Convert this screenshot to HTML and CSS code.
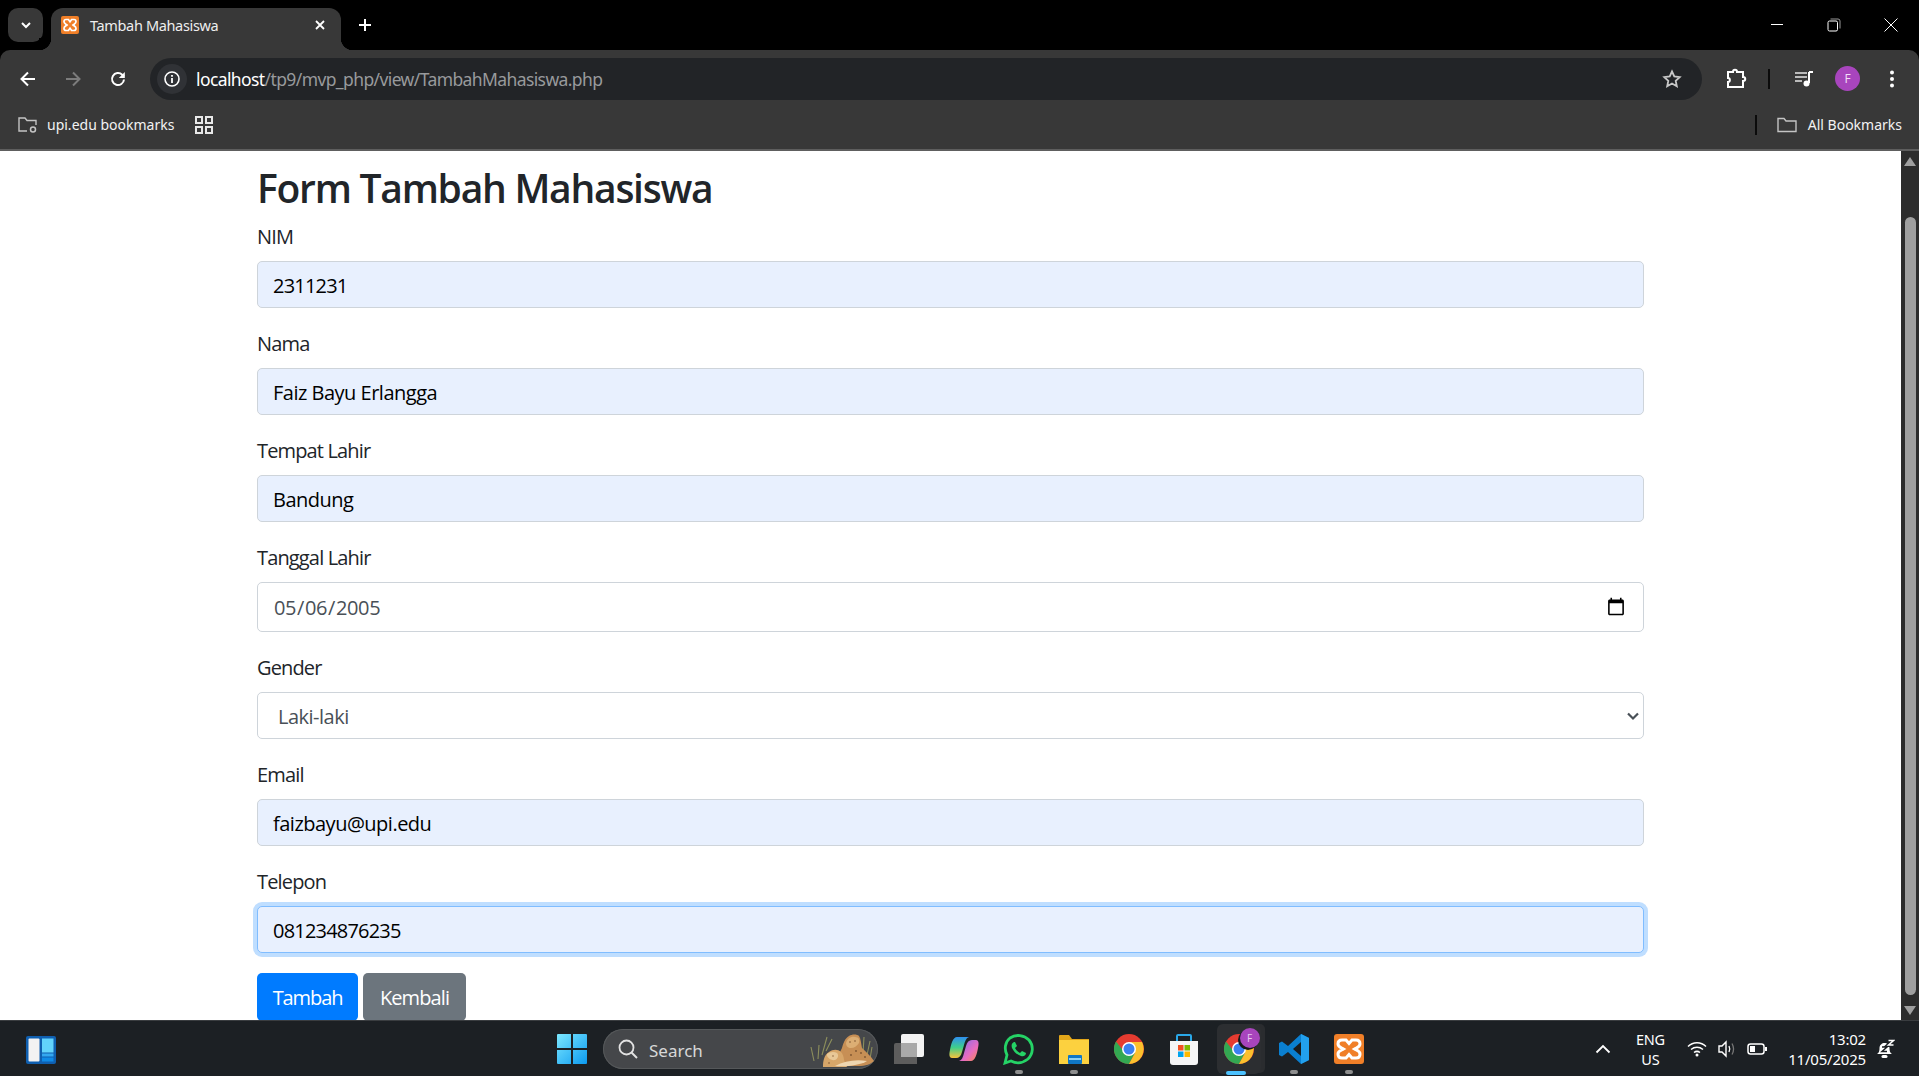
FILE: index.html
```html
<!DOCTYPE html>
<html lang="en">
<head>
<meta charset="utf-8">
<title>Tambah Mahasiswa</title>
<link rel="stylesheet" href="styles.css">
</head>
<body>
<div class="window">
  <header class="tabstrip">
    <button class="tabsearch"><svg width="14" height="14" viewBox="0 0 14 14"><path d="M3 5l4 4 4-4" fill="none" stroke="#fff" stroke-width="2"/></svg></button>
    <div class="tab">
      <svg class="favicon" width="18" height="18" viewBox="0 0 18 18"><rect width="18" height="18" rx="2" fill="#f07f28"/><path d="M5 3.500h2.400l1.600 2.200 1.600-2.200H13c1.600 0 2 1.200 2 2.300 0 1.600-1.500 2-3 3.200 1.500 1.200 3 1.600 3 3.200 0 1.100-.4 2.300-2 2.300h-2.400L9 12.300l-1.600 2.200H5c-1.600 0-2-1.200-2-2.300 0-1.600 1.500-2 3-3.200-1.500-1.200-3-1.600-3-3.200 0-1.100.4-2.300 2-2.300z" fill="none" stroke="#fff" stroke-width="1.700"/></svg>
      <span class="tabtitle">Tambah Mahasiswa</span>
      <svg class="tabclose" width="12" height="12" viewBox="0 0 12 12"><path d="M2 2l8 8M10 2l-8 8" stroke="#fff" stroke-width="1.800"/></svg>
    </div>
    <svg class="newtab" width="16" height="16" viewBox="0 0 16 16"><path d="M8 2v12M2 8h12" stroke="#fff" stroke-width="2"/></svg>
    <div class="winctl">
      <svg width="14" height="14" viewBox="0 0 14 14"><path d="M1 6.500h12" stroke="#fff" stroke-width="1"/></svg>
      <svg width="14" height="14" viewBox="0 0 14 14"><rect x="1" y="3" width="9.500" height="10" rx="1.500" fill="none" stroke="#fff" stroke-width="1"/><path d="M3.500 1h7.500a2 2 0 0 1 2 2v7.500" fill="none" stroke="#999" stroke-width="1"/></svg>
      <svg width="14" height="14" viewBox="0 0 14 14"><path d="M.5.500l13 13M13.500.500l-13 13" stroke="#fff" stroke-width="1"/></svg>
    </div>
  </header>

  <div class="toolbars">
    <nav class="toolbar">
      <svg class="navicon" width="20" height="20" viewBox="0 0 20 20"><path d="M17 10H4M10 3.500L3.500 10l6.500 6.500" fill="none" stroke="#fff" stroke-width="2"/></svg>
      <svg class="navicon" width="20" height="20" viewBox="0 0 20 20"><path d="M3 10h13M10 3.500l6.500 6.500-6.500 6.500" fill="none" stroke="#7c7c7c" stroke-width="2"/></svg>
      <svg class="navicon" width="20" height="20" viewBox="0 0 20 20"><path d="M16 10.500a6 6 0 1 1-1.800-4.800L16 7.500" fill="none" stroke="#fff" stroke-width="2"/><path d="M16.800 3v6h-6z" fill="#fff"/></svg>
      <div class="omnibox">
        <span class="infochip"><svg width="18" height="18" viewBox="0 0 18 18"><circle cx="9" cy="9" r="7" fill="none" stroke="#fff" stroke-width="1.600"/><path d="M9 8v5M9 5v1.700" stroke="#fff" stroke-width="1.800"/></svg></span>
        <span class="url"><span class="urlhost">localhost</span>/tp9/mvp_php/view/TambahMahasiswa.php</span>
        <svg class="star" width="20" height="20" viewBox="0 0 20 20"><path d="M10 2.500l2.300 5 5.400.6-4 3.700 1.100 5.400-4.800-2.700-4.800 2.700 1.100-5.400-4-3.700 5.400-.6z" fill="none" stroke="#c8c8c8" stroke-width="1.800"/></svg>
      </div>
      <svg class="extension" width="22" height="22" viewBox="0 0 22 22"><path d="M3 4h5c0-3 4-3 4 0h6v5c3 0 3 4 0 4v6H3v-5c2.500 0 2.500-4 0-4z" fill="none" stroke="#fff" stroke-width="2"/></svg>
      <span class="vsep"></span>
      <svg class="media" width="20" height="20" viewBox="0 0 20 20"><path d="M1 4h12M1 8h12M1 12h7" stroke="#e6e6e6" stroke-width="1.700"/><path d="M15 3v11" stroke="#fff" stroke-width="2"/><path d="M15 3h4" stroke="#fff" stroke-width="2"/><circle cx="12.500" cy="14.500" r="3" fill="#fff"/></svg>
      <span class="avatar">F</span>
      <svg class="kebab" width="6" height="20" viewBox="0 0 6 20"><circle cx="3" cy="3.500" r="2" fill="#fff"/><circle cx="3" cy="10" r="2" fill="#fff"/><circle cx="3" cy="16.500" r="2" fill="#fff"/></svg>
    </nav>
    <div class="bookmarks">
      <svg width="22" height="18" viewBox="0 0 22 18"><path d="M10 15H2V2h6l2 2.500h9V9" fill="none" stroke="#c4c4c4" stroke-width="1.400"/><circle cx="16" cy="13.500" r="2.500" fill="none" stroke="#c4c4c4" stroke-width="1.500"/></svg>
      <span class="bmlabel">upi.edu bookmarks</span>
      <svg class="apps" width="22" height="22" viewBox="0 0 22 22"><g fill="none" stroke="#e8e8e8" stroke-width="2"><rect x="3" y="3" width="6" height="6"/><rect x="13" y="3" width="6" height="6"/><rect x="3" y="13" width="6" height="6"/><rect x="13" y="13" width="6" height="6"/></g></svg>
      <span class="bmsep"></span>
      <svg class="allfolder" width="20" height="16" viewBox="0 0 20 16"><path d="M1 14.500V1.500h6l2 2.500h10v10.500z" fill="none" stroke="#c4c4c4" stroke-width="1.400"/></svg>
      <span class="bmall">All Bookmarks</span>
    </div>
  </div>

  <main class="viewport">
    <div class="page">
      <h2 class="title">Form Tambah Mahasiswa</h2>
      <form class="form">
        <div class="group"><label class="label">NIM</label><input class="control filled digits" type="text" value="2311231"></div>
        <div class="group"><label class="label">Nama</label><input class="control filled" type="text" value="Faiz Bayu Erlangga"></div>
        <div class="group"><label class="label">Tempat Lahir</label><input class="control filled" type="text" value="Bandung"></div>
        <div class="group"><label class="label">Tanggal Lahir</label><input class="control date" type="date" value="2005-05-06"></div>
        <div class="group"><label class="label">Gender</label>
          <div class="selectwrap"><select class="control select"><option>Laki-laki</option></select>
            <svg class="chevron" width="14" height="10" viewBox="0 0 14 10"><path d="M2 2.500l5 5 5-5" fill="none" stroke="#495057" stroke-width="2.200"/></svg>
          </div>
        </div>
        <div class="group"><label class="label">Email</label><input class="control filled" type="text" value="faizbayu@upi.edu"></div>
        <div class="group"><label class="label">Telepon</label><input class="control filled focus digits" type="text" value="081234876235"></div>
        <div class="actions"><button type="button" class="btn primary">Tambah</button><button type="button" class="btn secondary">Kembali</button></div>
      </form>
    </div>
    <div class="scrollbar">
      <svg class="arrow" width="12" height="9" viewBox="0 0 12 9"><path d="M6 0l6 9H0z" fill="#9f9f9f"/></svg>
      <div class="thumb"></div>
      <svg class="arrow" width="12" height="9" viewBox="0 0 12 9"><path d="M6 9L0 0h12z" fill="#9f9f9f"/></svg>
    </div>
  </main>

  <footer class="taskbar">
    <div class="tb-left">
      <svg width="30" height="28" viewBox="0 0 30 28"><rect width="30" height="28" rx="2" fill="#0f5fb0"/><rect x="2.500" y="2.500" width="11" height="23" rx="1" fill="#f2f2f2"/><rect x="16" y="2.500" width="11.500" height="14" fill="#62d3fb"/><rect x="16" y="17.500" width="11.500" height="3" fill="#34a8f0"/><rect x="16" y="21.500" width="11.500" height="4" fill="#0f8ae6"/></svg>
    </div>
    <div class="tb-center">
      <div class="tb-item"><svg width="30" height="30" viewBox="0 0 30 30"><defs><linearGradient id="win" x1="0" y1="0" x2="1" y2="1"><stop offset="0" stop-color="#7ce8ff"/><stop offset="1" stop-color="#0c9af0"/></linearGradient></defs><path d="M0 1a1 1 0 0 1 1-1h13v14H0zM16 0h13a1 1 0 0 1 1 1v13H16zM0 16h14v14H1a1 1 0 0 1-1-1zM16 16h14v13a1 1 0 0 1-1 1H16z" fill="url(#win)"/></svg></div>
      <div class="search">
        <svg width="22" height="22" viewBox="0 0 22 22"><circle cx="9.500" cy="9.500" r="7" fill="none" stroke="#e2e2e2" stroke-width="1.800"/><path d="M14.500 14.500l5.500 5.500" stroke="#e2e2e2" stroke-width="2"/></svg>
        <span class="searchtext">Search</span>
        <svg class="cheetah" width="66" height="36" viewBox="0 0 66 36"><g stroke="#8d8f5c" stroke-width="1.100" fill="none"><path d="M5 30L2 16M9 28l1-14M13 24L18 6M17 20l6-12M54 22l1-16M58 24l3-14M61 28l2-12"/></g><path d="M33 17c1-4 3-10 7-12 3-2 8-2 10 0 2 3 2 8 3 12 4 4 9 8 12 13-3 3-8 5-16 5H24z" fill="#c78f55"/><path d="M37 12c1-4 5-7 9-6 4 0 5 3 4 6-2 3-5 5-8 5-3 0-5-2-5-5z" fill="#dcae74"/><path d="M14 36c0-6 1-12 6-15 4-3 9-3 12 0 2 2 3 6 3 8l3 7z" fill="#d7a669"/><path d="M18 23c2-2 7-3 10-1 2 2 1 6-2 7-4 1-9-3-8-6z" fill="#e8c897"/><path d="M26 35c9-5 21-7 32-5-6 4-20 6-32 5z" fill="#efd6b0"/><g fill="#7d5430"><circle cx="52" cy="22" r=".9"/><circle cx="47" cy="20" r=".9"/><circle cx="56" cy="26" r=".9"/><circle cx="42" cy="24" r=".9"/><circle cx="46" cy="10" r=".8"/><circle cx="41" cy="11" r=".8"/><circle cx="24" cy="25" r=".7"/><circle cx="20" cy="32" r=".8"/></g></svg>
      </div>
      <div class="tb-item"><svg width="30" height="30" viewBox="0 0 30 30"><rect x="0" y="9" width="23" height="23" rx="2" fill="#5d5d5d"/><rect x="7" y="0" width="23" height="23" rx="2" fill="#f3f3f3"/><rect x="7" y="9" width="16" height="14" fill="#a9a9a9"/></svg></div>
      <div class="tb-item"><svg width="30" height="30" viewBox="0 0 30 30"><defs><linearGradient id="cpa" x1="0" y1="0" x2="0" y2="1"><stop offset="0" stop-color="#2f8ff0"/><stop offset=".5" stop-color="#3fcf8a"/><stop offset="1" stop-color="#f7c33c"/></linearGradient><linearGradient id="cpb" x1="0" y1="0" x2="1" y2="1"><stop offset="0" stop-color="#7f6cf0"/><stop offset=".6" stop-color="#e86cc0"/><stop offset="1" stop-color="#f88a4a"/></linearGradient></defs><path d="M8 3h12c-3 1-4 4-5 8l-2 7c-1 4-3 6-6 6H3C0 24 0 20 1 16 2 10 4 3 8 3z" fill="url(#cpa)"/><path d="M22 27H10c3-1 4-4 5-8l2-7c1-4 3-6 6-6h4c3 0 3 4 2 8-1 6-3 13-7 13z" fill="url(#cpb)"/></svg></div>
      <div class="tb-item with-dot"><svg width="32" height="32" viewBox="0 0 32 32"><path d="M2 30l2-8C1 16 2 9 7 5c6-4 14-3 19 2 5 6 4 14-1 19-5 4-11 5-17 2z" fill="none" stroke="#25d366" stroke-width="2.800"/><path d="M11 9c-2 1-3 3-2 6 2 4 5 7 9 8 3 1 5-1 5-3l-4-2-2 2c-2-1-4-3-5-5l2-2-2-4z" fill="#25d366"/></svg><i class="dot"></i></div>
      <div class="tb-item with-dot"><svg width="30" height="30" viewBox="0 0 30 30"><path d="M0 2a1 1 0 0 1 1-1h9l3 4h17v24H0z" fill="#e3a71a"/><rect y="6" width="30" height="24" fill="#fcd13f"/><rect x="9" y="21" width="14" height="9" rx="1" fill="#0f77c6"/><rect x="10" y="24" width="12" height="2" fill="#8bd0f5"/></svg><i class="dot"></i></div>
      <div class="tb-item"><svg width="30" height="30" viewBox="0 0 30 30"><circle cx="15" cy="15" r="15" fill="#e53b30"/><path d="M8 15L2 7.500A15 15 0 0 0 15 30l6-11z" fill="#33a852"/><path d="M15 8h13A15 15 0 0 1 15 30l6-11z" fill="#fbc02d"/><circle cx="15" cy="15" r="7" fill="#fff"/><circle cx="15" cy="15" r="5.500" fill="#3b80f0"/></svg></div>
      <div class="tb-item"><svg width="30" height="32" viewBox="0 0 30 32"><path d="M8 8V3a1 1 0 0 1 1-1h12a1 1 0 0 1 1 1v5" fill="none" stroke="#2aa8e8" stroke-width="2"/><path d="M1 8h28v21a3 3 0 0 1-3 3H4a3 3 0 0 1-3-3z" fill="#f5f5f5"/><rect x="9" y="12" width="5.500" height="5.500" fill="#f25022"/><rect x="15.500" y="12" width="5.500" height="5.500" fill="#7fba00"/><rect x="9" y="18.500" width="5.500" height="5.500" fill="#00a4ef"/><rect x="15.500" y="18.500" width="5.500" height="5.500" fill="#ffb900"/></svg></div>
      <div class="tb-item active">
        <span class="stack"></span>
        <span class="activebg"><svg class="chromeicon" width="30" height="30" viewBox="0 0 30 30"><circle cx="15" cy="15" r="15" fill="#e53b30"/><path d="M8 15L2 7.500A15 15 0 0 0 15 30l6-11z" fill="#33a852"/><path d="M15 8h13A15 15 0 0 1 15 30l6-11z" fill="#fbc02d"/><circle cx="15" cy="15" r="7" fill="#fff"/><circle cx="15" cy="15" r="5.500" fill="#3b80f0"/></svg><span class="badge">F</span></span>
        <i class="activebar"></i>
      </div>
      <div class="tb-item with-dot"><svg width="30" height="30" viewBox="0 0 30 30"><path d="M22 0l8 4v22l-8 4-13-12-6 4.500-3-1.500v-12l3-1.500L9 12z" fill="#0a7fd0"/><path d="M22 0l8 4v22l-8 4z" fill="#22a0ee"/><path d="M22 8l-8 7 8 7z" fill="#1a1c1e"/></svg><i class="dot"></i></div>
      <div class="tb-item with-dot"><svg width="30" height="30" viewBox="0 0 30 30"><rect width="30" height="30" rx="3" fill="#f07f28"/><path d="M8 6h4l3 3.500L18 6h4c3 0 4 2 4 4 0 3-3 3.500-5.500 5 2.500 1.500 5.500 2 5.500 5 0 2-1 4-4 4h-4l-3-3.500L12 24H8c-3 0-4-2-4-4 0-3 3-3.500 5.500-5C7 13.500 4 13 4 10c0-2 1-4 4-4z" fill="none" stroke="#fff" stroke-width="3"/></svg><i class="dot"></i></div>
    </div>
    <div class="tb-right">
      <svg class="tray-up" width="16" height="10" viewBox="0 0 16 10"><path d="M1.500 8.500L8 2l6.500 6.500" fill="none" stroke="#fff" stroke-width="1.800"/></svg>
      <div class="lang"><span>ENG</span><span>US</span></div>
      <svg class="tray-wifi" width="20" height="16" viewBox="0 0 20 16"><g fill="none" stroke="#fff" stroke-width="1.500"><path d="M1 5.500c5-5 13-5 18 0"/><path d="M4 8.500c3.500-3 8.500-3 12 0"/><path d="M7 11.500c2-1.500 4-1.500 6 0"/></g><circle cx="10" cy="14" r="1.500" fill="#fff"/></svg>
      <svg class="tray-vol" width="20" height="18" viewBox="0 0 20 18"><path d="M1 6h3l4-4v14l-4-4H1z" fill="none" stroke="#fff" stroke-width="1.400"/><path d="M11 6c1 2 1 4 0 6" fill="none" stroke="#fff" stroke-width="1.300"/><path d="M14 3.500c2 3.500 2 7.500 0 11" fill="none" stroke="#777" stroke-width="1.300"/></svg>
      <svg class="tray-bat" width="20" height="12" viewBox="0 0 20 12"><rect x="1" y="1" width="16" height="10" rx="2.500" fill="none" stroke="#fff" stroke-width="1.500"/><rect x="3" y="3" width="5" height="6" fill="#fff"/><rect x="18" y="4" width="2" height="4" fill="#fff"/></svg>
      <div class="clock"><span>13:02</span><span>11/05/2025</span></div>
      <svg class="tray-bell" width="18" height="20" viewBox="0 0 18 20"><path d="M0 15c2-1 2.500-3 2.500-6 0-3 2.500-5 5-5s5 2 5 5c0 3 .5 5 2.500 6z" fill="#fff"/><rect x="4.500" y="16" width="6" height="3" rx="1.500" fill="#fff"/><path d="M5 8h5l-5 4.500h5" fill="none" stroke="#1c2024" stroke-width="1.500"/><path d="M11 1h6l-5.500 5h6" fill="none" stroke="#1c2024" stroke-width="4"/><path d="M11.500 1.500h5l-5 4.500h5" fill="none" stroke="#fff" stroke-width="1.500"/></svg>
    </div>
  </footer>
</div>
</body>
</html>
```

FILE: styles.css
```css
* { box-sizing: border-box; }
html, body { margin: 0; padding: 0; height: 100%; overflow: hidden; }
body { font-family: "Open Sans", "Noto Sans", sans-serif; background: #000; }
.window { display: flex; flex-direction: column; height: 1076px; width: 1919px; }

/* tab strip */
.tabstrip { height: 50px; flex: none; background: #000; display: flex; align-items: flex-start; padding: 8px 0 0 8px; }
.tabsearch { width: 35px; height: 34px; border: 0; padding: 0; background: #383838; border-radius: 10px; display: flex; align-items: center; justify-content: center; }
.tab { position: relative; margin-left: 8px; width: 290px; height: 42px; background: #383838; border-radius: 12px 12px 0 0; display: flex; align-items: center; padding: 0 15px 8px 10px; }
.tab::before, .tab::after { content: ""; position: absolute; bottom: 0; width: 12px; height: 12px; }
.tab::before { left: -12px; background: radial-gradient(circle at 0 0, #000 12px, #383838 12.5px); }
.tab::after { right: -12px; background: radial-gradient(circle at 100% 0, #000 12px, #383838 12.5px); }
.favicon { flex: none; }
.tabtitle { margin-left: 11px; flex: 1; color: #eee; font-size: 14.5px; font-family: "Noto Sans", sans-serif; letter-spacing: -.35px; white-space: nowrap; }
.tabclose { flex: none; }
.newtab { margin: 9px 0 0 16px; }
.winctl { margin-left: auto; display: flex; gap: 43px; padding: 10px 21px 0 0; }

/* toolbars */
.toolbars { flex: none; background: #383838; border-radius: 10px 10px 0 0; border-bottom: 2px solid #5e5e5e; height: 101px; }
.toolbar { height: 58px; display: flex; align-items: center; padding: 0 0 0 18px; }
.navicon { flex: none; margin-right: 25px; }
.omnibox { flex: none; margin-left: -3px; width: 1552px; height: 42px; background: #222427; border-radius: 21px; display: flex; align-items: center; padding: 0 20px 0 7px; }
.infochip { width: 30px; height: 30px; border-radius: 50%; background: #303236; display: flex; align-items: center; justify-content: center; flex: none; }
.url { margin-left: 9px; flex: 1; color: #989a9c; font-size: 17.5px; font-family: "Noto Sans", sans-serif; letter-spacing: -.6px; white-space: nowrap; }
.urlhost { color: #fff; }
.star { flex: none; }
.extension { flex: none; margin-left: 23px; }
.vsep { flex: none; width: 2px; height: 20px; background: #0b0b0b; margin-left: 21px; }
.media { flex: none; margin-left: 24px; }
.avatar { flex: none; width: 25px; height: 25px; margin-bottom: 1px; border-radius: 50%; background: #a845bd; color: #f3dff7; font-size: 12px; display: flex; align-items: center; justify-content: center; margin-left: 21px; }
.kebab { flex: none; margin-left: 29px; }

.bookmarks { height: 41px; display: flex; align-items: center; padding: 0 17px 8px 17px; color: #fff; }
.bmlabel { margin-left: 8px; font-family: "Noto Sans", sans-serif; font-size: 14px; color: #f2f2f2; }
.apps { margin-left: 19px; }
.bmsep { margin-left: auto; width: 2px; height: 20px; background: #0b0b0b; }
.allfolder { margin-left: 20px; }
.bmall { margin-left: 11px; font-family: "Noto Sans", sans-serif; font-size: 14px; color: #f2f2f2; }

/* page */
.viewport { flex: 1; min-height: 0; background: #fff; display: flex; overflow: hidden; }
.page { flex: 1; min-width: 0; overflow: hidden; padding: 12px 257px 0 257px; color: #212529; }
.title { margin: 0 0 9px; padding-top: 1px; font-size: 39px; line-height: 48px; font-weight: 600; letter-spacing: -1.25px; }
.form { display: flex; flex-direction: column; }
.group { display: flex; flex-direction: column; margin-bottom: 20px; }
.label { padding-top: 1px; font-size: 20px; line-height: 30px; margin-bottom: 9px; letter-spacing: -.85px; }
.control { width: 100%; height: 47px; padding: 2px 15px 0; font-family: inherit; font-size: 20px; letter-spacing: -.5px; color: #000; background: #fff; border: 1px solid #ced4da; border-radius: 5px; outline: none; }
.digits { letter-spacing: -.8px; }
.filled { background: #e8f0fe; }
.focus { border-color: #80bdff; box-shadow: 0 0 0 4px rgba(0, 123, 255, .25); }
.date { height: 50px; color: #495057; padding-top: 0; letter-spacing: -.4px; }
.selectwrap { position: relative; display: flex; }
.select { appearance: none; color: #495057; padding-left: 20px; }
.chevron { position: absolute; right: 4px; top: 19px; pointer-events: none; }
.actions { display: flex; gap: 5px; }
.btn { flex: none; height: 47.5px; padding: 2px 15px 0; border: 0; border-radius: 5px; color: #fff; font-family: inherit; font-size: 20px; letter-spacing: -.9px; }
.primary { background: #007bff; width: 101px; letter-spacing: -1.1px; }
.secondary { background: #6c757d; width: 103px; }

.scrollbar { flex: none; width: 18px; background: #2c2c2c; display: flex; flex-direction: column; align-items: center; padding: 6px 0 5px; }
.arrow { flex: none; }
.thumb { flex: none; width: 11px; height: 778px; margin: 51px 0 auto; border-radius: 6px; background: #9f9f9f; }

/* taskbar */
.taskbar { position: relative; flex: none; height: 56px; background: #1c2024; border-top: 1px solid #3a3d40; display: flex; align-items: center; }
.tb-left { position: absolute; left: 26px; top: 15px; display: flex; }
.tb-center { margin-left: 544px; display: flex; align-items: center; height: 100%; }
.tb-item { position: relative; flex: none; width: 55px; height: 55px; display: flex; align-items: center; justify-content: center; }
.search { flex: none; width: 275px; height: 40px; margin: 0 3px 0 4px; background: #45474a; border-radius: 20px; display: flex; align-items: center; padding: 0 3px 0 14px; color: #d8d8d8; box-shadow: inset 0 0 0 1px #55585a; }
.searchtext { margin-left: 10px; padding-top: 3px; font-size: 17px; font-family: "Noto Sans", sans-serif; flex: 1; }
.cheetah { flex: none; }
.dot { position: absolute; left: 23.500px; bottom: 2px; width: 8px; height: 4px; border-radius: 2px; background: #8e8e8e; }
.activebg { position: relative; width: 44px; height: 50px; background: #2c2e31; border-radius: 6px; display: flex; align-items: center; justify-content: center; }
.stack { position: absolute; right: 1px; top: 3px; width: 8px; height: 49px; background: #2a2c2f; border-radius: 0 5px 5px 0; }
.chromeicon { margin: 0 0 0 1px; }
.badge { position: absolute; right: 1px; top: 4px; width: 20px; height: 20px; border-radius: 50%; background: #a845bd; color: #e9c9ef; font-size: 10px; display: flex; align-items: center; justify-content: center; box-shadow: -2px 2px 0 #16181a; }
.activebar { position: absolute; left: 15px; bottom: 1px; width: 20px; height: 4px; border-radius: 2px; background: #4cc2ff; }

.tb-right { position: absolute; left: 0; right: 0; top: 0; bottom: 0; pointer-events: none; display: flex; align-items: center; justify-content: flex-end; padding-right: 24px; color: #fff; font-family: "Noto Sans", sans-serif; }
.lang { display: flex; flex-direction: column; align-items: center; width: 36px; margin-left: 21.500px; font-size: 14.500px; line-height: 20px; letter-spacing: -.2px; }
.tray-wifi { margin-left: 19px; }
.tray-vol { margin-left: 10.400px; }
.tray-bat { margin-left: 9.400px; }
.clock { display: flex; flex-direction: column; align-items: flex-end; margin-left: 21px; font-size: 15px; line-height: 20px; letter-spacing: -.2px; }
.tray-bell { margin-left: 11px; }
```
